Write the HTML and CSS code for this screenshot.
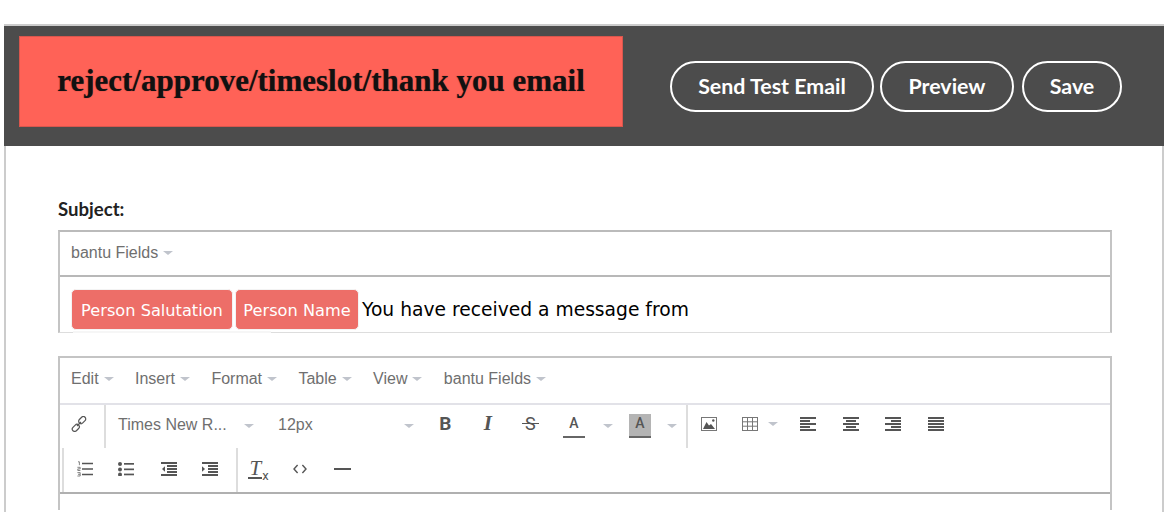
FILE: index.html
```html
<!DOCTYPE html>
<html lang="en">
<head>
    <meta charset="UTF-8">
    <title>Email template</title>
    <link rel="stylesheet" href="styles.css">
</head>
<body>
    <div class="page">
        <!-- Header -->
        <div class="header">
            <div class="title-box">reject/approve/timeslot/thank you email</div>
            <div class="actions">
                <a class="btn btn-test">Send Test Email</a>
                <a class="btn btn-preview">Preview</a>
                <a class="btn btn-save">Save</a>
            </div>
        </div>

        <div class="content">
            <div class="subject-label">Subject:</div>

            <!-- Subject editor -->
            <div class="subject-box">
                <div class="subject-menu"><span class="menu-item">bantu Fields<i class="caret"></i></span></div>
                <div class="subject-text">
                    <span class="tag tag-salutation">Person Salutation</span>
                    <span class="tag tag-name">Person Name</span>
                    <span class="subject-copy">You have received a message from</span>
                    <span class="ghost"></span>
                </div>
            </div>

            <!-- Body editor -->
            <div class="editor">
                <div class="menu-row">
                    <span class="menu-item">Edit<i class="caret"></i></span>
                    <span class="menu-item">Insert<i class="caret"></i></span>
                    <span class="menu-item">Format<i class="caret"></i></span>
                    <span class="menu-item">Table<i class="caret"></i></span>
                    <span class="menu-item">View<i class="caret"></i></span>
                    <span class="menu-item">bantu Fields<i class="caret"></i></span>
                </div>

                <div class="tool-row tool-row-first">
                    <span class="tool tool-link sep-right">
                        <svg width="16" height="16" viewBox="0 0 16 16" fill="none" stroke="#555" stroke-width="1.2"><rect x="7.2" y="1.7" width="8" height="4.8" rx="2.4" transform="rotate(-45 11.2 4.1)"/><rect x=".8" y="9.5" width="8" height="4.8" rx="2.4" transform="rotate(-45 4.8 11.9)"/><path d="M6 10l4-4"/></svg>
                    </span>
                    <span class="select select-font">Times New R...<i class="caret"></i></span>
                    <span class="select select-size">12px<i class="caret"></i></span>
                    <span class="tool glyph glyph-b">B</span>
                    <span class="tool glyph glyph-i">I</span>
                    <span class="tool glyph glyph-s"><span class="strike">S</span></span>
                    <span class="tool tool-color tool-fore"><span class="color-a">A</span></span>
                    <i class="caret caret-tool"></i>
                    <span class="tool tool-color tool-back"><span class="color-a">A</span></span>
                    <i class="caret caret-tool caret-back"></i>
                    <span class="sep"></span>
                    <span class="tool tool-image">
                        <svg width="16" height="14" viewBox="0 0 16 14"><rect x=".5" y=".5" width="15" height="13" fill="none" stroke="#777"/><path d="M2 12l3.5-7 2.5 3.5 2-1.5 4 5z" fill="#555"/><circle cx="12.3" cy="3.5" r="1.2" fill="#555"/></svg>
                    </span>
                    <span class="tool tool-table">
                        <svg width="16" height="14" viewBox="0 0 16 14" fill="none" stroke="#777"><rect x=".5" y=".5" width="15" height="13"/><path d="M5.5 0v14M10.5 0v14M0 4.8h16M0 9.2h16"/></svg>
                        <i class="caret"></i>
                    </span>
                    <span class="tool">
                        <svg width="16" height="14" viewBox="0 0 16 14" fill="#555"><rect width="16" height="2"/><rect y="3" width="10" height="2"/><rect y="6" width="16" height="2"/><rect y="9" width="10" height="2"/><rect y="12" width="16" height="2"/></svg>
                    </span>
                    <span class="tool">
                        <svg width="16" height="14" viewBox="0 0 16 14" fill="#555"><rect width="16" height="2"/><rect x="3" y="3" width="10" height="2"/><rect y="6" width="16" height="2"/><rect x="3" y="9" width="10" height="2"/><rect y="12" width="16" height="2"/></svg>
                    </span>
                    <span class="tool">
                        <svg width="16" height="14" viewBox="0 0 16 14" fill="#555"><rect width="16" height="2"/><rect x="6" y="3" width="10" height="2"/><rect y="6" width="16" height="2"/><rect x="6" y="9" width="10" height="2"/><rect y="12" width="16" height="2"/></svg>
                    </span>
                    <span class="tool">
                        <svg width="16" height="14" viewBox="0 0 16 14" fill="#555"><rect width="16" height="2"/><rect y="3" width="16" height="2"/><rect y="6" width="16" height="2"/><rect y="9" width="16" height="2"/><rect y="12" width="16" height="2"/></svg>
                    </span>
                </div>

                <div class="tool-row tool-row-second">
                    <span class="tool tool-first">
                        <svg width="16" height="16" viewBox="0 0 16 16"><path d="M5 2.5h11M5 8h11M5 13.5h11" stroke="#555" stroke-width="1.6"/><path d="M1 .8h1.4v3.4M.4 6.3h2.8v1.6H.8v1.6h2.6M.4 11.6h2.8v3.4H.4M1 13.3h2" fill="none" stroke="#666" stroke-width=".8"/></svg>
                    </span>
                    <span class="tool">
                        <svg width="16" height="14" viewBox="0 0 16 14" fill="#555"><circle cx="2" cy="2" r="2"/><circle cx="2" cy="7.5" r="2"/><circle cx="2" cy="12.5" r="2"/><rect x="6" y="1" width="10" height="1.7"/><rect x="6" y="6.5" width="10" height="1.7"/><rect x="6" y="11.6" width="10" height="1.7"/></svg>
                    </span>
                    <span class="tool">
                        <svg width="16" height="14" viewBox="0 0 16 14" fill="#555"><rect width="16" height="2"/><rect x="6" y="3" width="10" height="2"/><rect x="6" y="6" width="10" height="2"/><rect x="6" y="9" width="10" height="2"/><rect y="12" width="16" height="2"/><path d="M4 4.2v5.6L1 7z"/></svg>
                    </span>
                    <span class="tool tool-last sep-right">
                        <svg width="16" height="14" viewBox="0 0 16 14" fill="#555"><rect width="16" height="2"/><rect x="6" y="3" width="10" height="2"/><rect x="6" y="6" width="10" height="2"/><rect x="6" y="9" width="10" height="2"/><rect y="12" width="16" height="2"/><path d="M0 4.2v5.6L3 7z"/></svg>
                    </span>
                    <span class="tool glyph glyph-clear"><span class="clear-t">T</span><span class="clear-x">x</span></span>
                    <span class="tool">
                        <svg width="14" height="10" viewBox="0 0 14 10" fill="none" stroke="#555" stroke-width="1.4"><path d="M4.6 1L1 5l3.6 4M9.4 1L13 5l-3.6 4"/></svg>
                    </span>
                    <span class="tool"><span class="hr-line"></span></span>
                </div>

                <div class="editor-body"></div>
            </div>
        </div>
    </div>
</body>
</html>
```

FILE: styles.css
```css
html, body {
    margin: 0;
    padding: 0;
    height: 512px;
    overflow: hidden;
    background: #fff;
}

body {
    padding-top: 24px;
    box-sizing: border-box;
    font-family: "Liberation Sans", Arial, sans-serif;
}

.page {
    margin-left: 4px;
    width: 1160px;
    box-sizing: border-box;
    border: 2px solid #ccc;
    border-bottom: none;
    height: 488px;
}

/* Header */
.header {
    height: 120px;
    margin-left: -2px;
    margin-right: -2px;
    background-color: #4c4c4c;
    display: flex;
    align-items: flex-start;
}

.title-box {
    width: 604px;
    height: 91px;
    margin: 10px 0 0 15px;
    box-sizing: border-box;
    border: 1px solid #d9564d;
    background-color: #ff6257;
    color: #111;
    font-family: "Liberation Serif", "Times New Roman", serif;
    font-weight: bold;
    font-size: 31px;
    line-height: 88px;
    text-align: center;
    text-shadow: 0 0 1px rgba(0, 0, 0, 0.5);
}

.actions {
    display: flex;
    margin: 35px 0 0 47px;
}

.btn {
    height: 51px;
    box-sizing: border-box;
    border: 2px solid #fff;
    border-radius: 26px;
    color: #fff;
    font-family: Lato, sans-serif;
    font-weight: bold;
    font-size: 21.4px;
    line-height: 46px;
    text-align: center;
}

.btn-test { width: 204px; }
.btn-preview { width: 134px; margin-left: 6px; }
.btn-save { width: 100px; margin-left: 8px; }

/* Content */
.content {
    padding: 53px 50px 0 52px;
}

.subject-label {
    font-family: Lato, sans-serif;
    font-weight: bold;
    font-size: 18.6px;
    line-height: 20px;
    color: #222;
    height: 31px;
}

.subject-box {
    width: 1054px;
    box-sizing: border-box;
    border: 2px solid #c4c4c4;
    border-bottom-width: 1px;
    border-bottom-color: #ddd;
    border-top-color: #bbb;
}

.subject-menu {
    height: 41px;
    padding: 0 0 2px 11px;
    display: flex;
    align-items: center;
    border-bottom: 2px solid #b8b8b8;
    font-size: 16px;
}

.subject-text {
    position: relative;
    height: 55px;
    padding: 12px 0 0 11px;
    box-sizing: border-box;
    display: flex;
    align-items: flex-start;
    font-family: "DejaVu Sans", Verdana, sans-serif;
}

.tag {
    height: 41px;
    box-sizing: border-box;
    border: 1px solid #f3f3f3;
    border-radius: 5px;
    background-color: #ed6e68;
    color: #fff;
    font-size: 16.2px;
    line-height: 41px;
    text-align: center;
}

.tag-salutation { width: 162px; }
.tag-name { width: 124px; margin-left: 2px; }

.subject-copy {
    margin-left: 3px;
    color: #000;
    font-size: 18.7px;
    line-height: 41px;
}

/* faint strip left over under the tags */
.ghost {
    position: absolute;
    left: 13px;
    bottom: -1px;
    width: 198px;
    height: 2px;
    background-color: #f6f6f6;
}

/* Editor */
.editor {
    width: 1054px;
    margin-top: 23px;
    box-sizing: border-box;
    border: 2px solid #c4c4c4;
    border-bottom: none;
    color: #555;
}

.menu-row {
    height: 41px;
    padding: 0 0 4px 11px;
    display: flex;
    align-items: center;
    border-bottom: 2px solid #e2e2e8;
    font-size: 16px;
}

.menu-item {
    display: flex;
    align-items: center;
    color: #6f6f6f;
    margin-right: 21.4px;
}

.caret {
    display: inline-block;
    width: 0;
    height: 0;
    margin-left: 5px;
    border-left: 5px solid transparent;
    border-right: 5px solid transparent;
    border-top: 4px solid #c0c4cc;
}

.tool-row {
    display: flex;
    align-items: stretch;
}

.tool-row-first { height: 43px; }
.tool-row-second { height: 44px; }

.tool-row-second {
    margin-left: 2px;
    border-left: 2px solid #ddd;
}

.tool {
    width: 42.5px;
    flex: none;
    display: flex;
    align-items: center;
    justify-content: center;
    box-sizing: border-box;
    padding-bottom: 6px;
}

.tool-row-second .tool {
    padding-bottom: 3px;
}

.tool-link {
    width: 46px;
    padding-right: 7px;
}

.tool-first { width: 41px; }
.tool-row-second .tool-last { width: 48px; padding-right: 6px; }
.tool-row-second .glyph-clear { width: 41px; }

.sep-right {
    border-right: 2px solid #ddd;
}

.sep {
    width: 2px;
    flex: none;
    background-color: #ddd;
}

.select {
    flex: none;
    position: relative;
    box-sizing: border-box;
    padding: 11px 0 0 12px;
    color: #6f6f6f;
    font-size: 16px;
    line-height: 18px;
}

.select .caret {
    position: absolute;
    top: 19px;
    right: 7px;
}

.select-font { width: 155px; }
.select-size { width: 163px; padding-left: 17px; }
.select-size .caret { right: 10px; }

.glyph {
    font-family: Roboto, sans-serif;
    font-size: 18px;
    color: #555;
}

.glyph-b { font-weight: bold; font-size: 19px; }

.glyph-i {
    font-family: "Liberation Serif", serif;
    font-style: italic;
    font-weight: bold;
    font-size: 21px;
}

.strike {
    position: relative;
}

.strike::after {
    content: "";
    position: absolute;
    left: -3px;
    right: -3px;
    top: 10px;
    height: 1px;
    background-color: #555;
}

.tool-color {
    padding-bottom: 0;
    align-items: flex-start;
}

.tool-fore { width: 45px; }
.tool-back { width: 43px; }

.color-a {
    display: block;
    width: 22px;
    height: 24px;
    margin-top: 9px;
    box-sizing: border-box;
    border-bottom: 2px solid #666;
    font-family: Roboto, sans-serif;
    font-weight: 500;
    font-size: 14px;
    line-height: 18px;
    text-align: center;
}

.tool-back .color-a {
    background-color: #b4b4b4;
}

.caret-tool {
    align-self: flex-start;
    margin: 19px 6px 0;
    flex: none;
}

.caret-back {
    margin-left: 5px;
    margin-right: 9.5px;
}

.tool-image { width: 41px; }

.tool-table {
    width: 58px;
    justify-content: flex-start;
    padding-left: 13px;
}

.tool-table .caret {
    margin-left: 10px;
}

.clear-t {
    font-family: "Liberation Serif", serif;
    font-style: italic;
    font-size: 21px;
    border-bottom: 2px solid #555;
    line-height: 18px;
    width: 14px;
    text-align: center;
}

.clear-x {
    font-size: 13px;
    line-height: 10px;
    margin-top: 14px;
}

.hr-line {
    display: block;
    width: 17px;
    height: 2px;
    background-color: #555;
}

.editor-body {
    height: 16px;
    border-top: 2px solid #b0b0b0;
}
```
